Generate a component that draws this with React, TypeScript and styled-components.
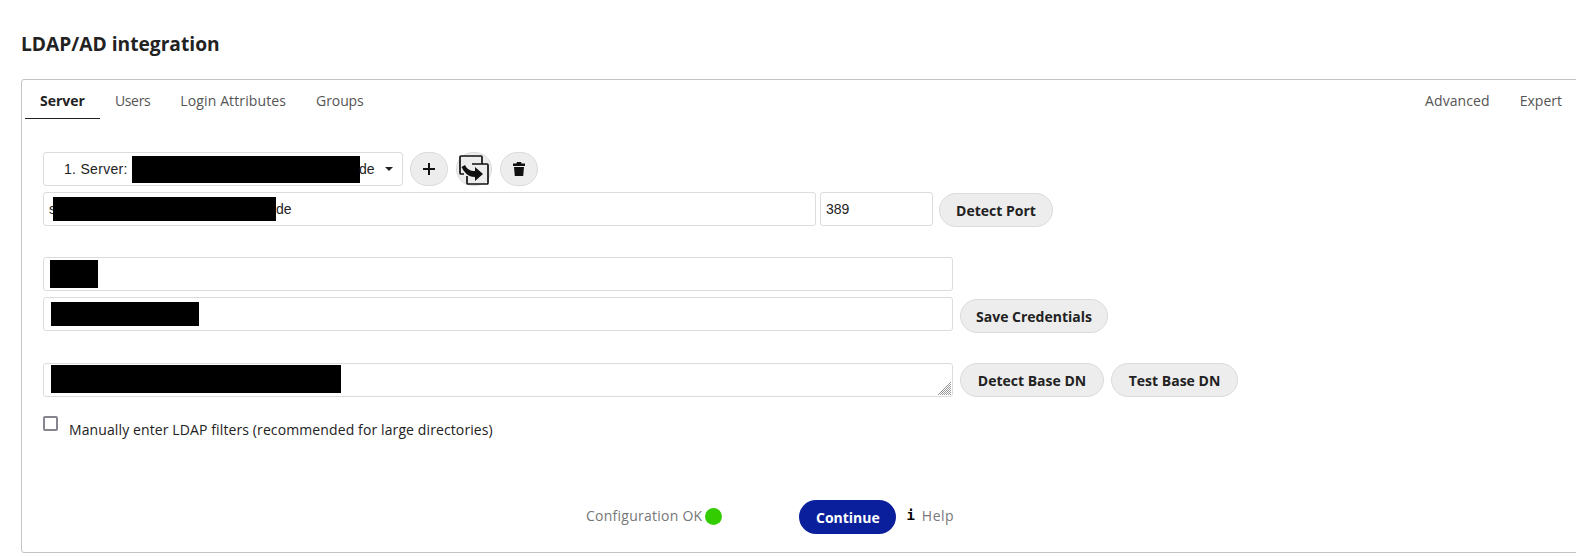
import React from 'react';
import styled, { createGlobalStyle } from 'styled-components';

const Global = createGlobalStyle`
  html, body { margin: 0; padding: 0; background: #fff; overflow: hidden; }
  body { font-family: "Open Sans", sans-serif; color: #222; width: 1576px; height: 556px; }
`;

const Page = styled.div`
  padding: 32px 0 0 21px;
  width: 1576px;
  box-sizing: border-box;
`;

const Title = styled.h2`
  margin: 0 0 22px;
  font-size: 19.2px;
  line-height: 24px;
  padding-bottom: 1px;
  font-weight: 700;
  color: #222;
`;

const Panel = styled.section`
  width: 1570px;
  height: 474px;
  box-sizing: border-box;
  border: 1px solid #c4c4c4;
  border-radius: 3px;
  display: flex;
  flex-direction: column;
`;

const Tabs = styled.nav`
  display: flex;
  justify-content: space-between;
  height: 39px;
  padding: 0 13px 0 3px;
  flex: none;
`;

const TabGroup = styled.div`
  display: flex;
`;

const Tab = styled.a<{ $active?: boolean; $spacing?: number }>`
  padding: 0 15px;
  font-size: 14px;
  line-height: 41px;
  height: 39px;
  box-sizing: border-box;
  letter-spacing: ${p => p.$spacing ?? 0}px;
  color: ${p => (p.$active ? '#222' : '#555')};
  font-weight: ${p => (p.$active ? 700 : 400)};
  border-bottom: ${p => (p.$active ? '1px solid #222' : '0')};
`;

const Body = styled.div`
  padding: 33px 0 0 21px;
  display: flex;
  flex-direction: column;
  flex: 1;
`;

const Row = styled.div<{ $top?: number }>`
  display: flex;
  align-items: flex-start;
  margin-top: ${p => p.$top ?? 0}px;
`;

const Field = styled.div<{ $width: number; $ml?: number }>`
  position: relative;
  width: ${p => p.$width}px;
  height: 34px;
  margin-left: ${p => p.$ml ?? 0}px;
  box-sizing: border-box;
  border: 1px solid #dcdcdc;
  border-radius: 3px;
  background: #fff;
  flex: none;
  font-family: "Liberation Sans", Arial, sans-serif;
  font-size: 14px;
  line-height: 32px;
  padding-left: 5px;
  color: #222;
  white-space: nowrap;
`;

const SelectField = styled(Field)`
  padding-left: 20px;
  line-height: 33px;
  letter-spacing: 0.3px;
`;

const Redaction = styled.span<{ $left: number; $top: number; $w: number; $h: number }>`
  position: absolute;
  left: ${p => p.$left}px;
  top: ${p => p.$top}px;
  width: ${p => p.$w}px;
  height: ${p => p.$h}px;
  background: #000;
`;

const TrailingText = styled.span<{ $left: number }>`
  position: absolute;
  left: ${p => p.$left}px;
  top: 0;
  letter-spacing: 0;
`;

const Caret = styled.span`
  position: absolute;
  right: 9px;
  top: 14px;
  width: 0;
  height: 0;
  border-left: 4px solid transparent;
  border-right: 4px solid transparent;
  border-top: 4px solid #222;
`;

const Grip = styled.svg`
  position: absolute;
  right: 0;
  bottom: 0;
`;

const Button = styled.button<{ $ml?: number; $w: number; $mt?: number }>`
  width: ${p => p.$w}px;
  height: 34px;
  padding: 0;
  margin-left: ${p => p.$ml ?? 0}px;
  margin-top: ${p => p.$mt ?? 0}px;
  border: 1px solid #dbdbdb;
  border-radius: 17px;
  background: #ededed;
  font-family: "Open Sans", sans-serif;
  font-size: 14px;
  font-weight: 700;
  color: #222;
  white-space: nowrap;
  flex: none;
`;

const IconButton = styled.button<{ $ml: number; $w: number }>`
  position: relative;
  width: ${p => p.$w}px;
  height: 34px;
  padding: 0;
  margin-left: ${p => p.$ml}px;
  border: 1px solid #dbdbdb;
  border-radius: 17px;
  background: #ededed;
  display: flex;
  align-items: center;
  justify-content: center;
  flex: none;
`;

const OverflowIcon = styled.svg`
  position: absolute;
  left: 0;
  top: 1px;
  overflow: visible;
`;

const CheckRow = styled.div`
  display: flex;
  align-items: flex-start;
  margin-top: 19px;
`;

const CheckBox = styled.span`
  width: 15px;
  height: 15px;
  box-sizing: border-box;
  border: 2px solid #85858f;
  border-radius: 2px;
  background: #fff;
  flex: none;
`;

const CheckLabel = styled.label`
  margin: 4px 0 0 11px;
  font-size: 14px;
  line-height: 19px;
  letter-spacing: 0.11px;
  color: #222;
`;

const Footer = styled.footer`
  display: flex;
  align-items: center;
  margin-top: 61px;
  padding-left: 543px;
`;

const Muted = styled.span<{ $spacing: number }>`
  margin-top: -3px;
  font-size: 14px;
  letter-spacing: ${p => p.$spacing}px;
  color: #777;
`;

const Dot = styled.span`
  width: 17px;
  height: 17px;
  margin: -1px 0 0 3px;
  border-radius: 50%;
  background: #3c0;
  flex: none;
`;

const Primary = styled.button`
  width: 97px;
  height: 34px;
  margin-left: 77px;
  border: 0;
  border-radius: 17px;
  background: #0a1f9c;
  color: #fff;
  font-family: "Open Sans", sans-serif;
  font-size: 14px;
  font-weight: 700;
  flex: none;
`;

const InfoGlyph = styled.span`
  margin: -5px 7px 0 10px;
  font-family: "DejaVu Sans Mono", monospace;
  font-size: 14px;
  font-weight: 700;
  color: #000;
`;

export default function App() {
  return (
    <Page>
      <Global />
      <Title>LDAP/AD integration</Title>
      <Panel>
        <Tabs>
          <TabGroup>
            <Tab $active>Server</Tab>
            <Tab $spacing={-0.35}>Users</Tab>
            <Tab $spacing={0.12}>Login Attributes</Tab>
            <Tab $spacing={-0.1}>Groups</Tab>
          </TabGroup>
          <TabGroup>
            <Tab $spacing={0.1}>Advanced</Tab>
            <Tab>Expert</Tab>
          </TabGroup>
        </Tabs>
        <Body>
          <Row>
            <SelectField $width={360}>
              1. Server: s
              <Redaction $left={88} $top={3} $w={228} $h={27} />
              <TrailingText $left={315}>de</TrailingText>
              <Caret />
            </SelectField>
            <IconButton $ml={7} $w={38}>
              <svg width="16" height="16" viewBox="0 0 16 16" aria-hidden="true">
                <path d="M8 2v12M2 8h12" stroke="#111" strokeWidth="2" fill="none" />
              </svg>
            </IconButton>
            <IconButton $ml={8} $w={36}>
              <OverflowIcon width="34" height="32" viewBox="0 0 34 32" aria-hidden="true">
                <path d="M7 20H4a1 1 0 0 1-1-1V3a1 1 0 0 1 1-1h20a1 1 0 0 1 1 1v7" stroke="#111" strokeWidth="1.7" fill="none" />
                <path d="M10 22v7a1 1 0 0 0 1 1h19a1 1 0 0 0 1-1V11a1 1 0 0 0-1-1H15" stroke="#111" strokeWidth="1.7" fill="none" />
                <path d="M4.500 13 8 11c2 4 5 6 10 6v-4l8 7-8 7v-4c-7 0-11-5-13.500-10z" fill="#111" />
              </OverflowIcon>
            </IconButton>
            <IconButton $ml={8} $w={38}>
              <svg width="14" height="16" viewBox="0 0 14 16" aria-hidden="true">
                <path d="M5 1h4l.6 1.500H13V5H1V2.500h3.400zM2 6h10l-.8 9H2.800z" fill="#111" />
              </svg>
            </IconButton>
          </Row>
          <Row $top={6}>
            <Field $width={773}>
              s
              <Redaction $left={9} $top={4} $w={223} $h={24} />
              <TrailingText $left={232}>de</TrailingText>
            </Field>
            <Field $width={113} $ml={4}>389</Field>
            <Button $ml={6} $w={114} $mt={1}>Detect Port</Button>
          </Row>
          <Row $top={30}>
            <Field $width={910}>
              <Redaction $left={6} $top={2} $w={48} $h={28} />
            </Field>
          </Row>
          <Row $top={6}>
            <Field $width={910}>
              <Redaction $left={7} $top={4} $w={148} $h={24} />
            </Field>
            <Button $ml={7} $w={148} $mt={2}>Save Credentials</Button>
          </Row>
          <Row $top={30}>
            <Field $width={910}>
              <Redaction $left={7} $top={1} $w={290} $h={28} />
              <Grip width="15" height="15" viewBox="0 0 15 15" aria-hidden="true">
                <path d="M14 1 1 14M14 3 3 14M14 5 5 14M14 7 7 14M14 9l-5 5M14 11l-3 3M14 13l-1 1" stroke="#808080" strokeWidth="0.8" fill="none" />
              </Grip>
            </Field>
            <Button $ml={7} $w={144}>Detect Base DN</Button>
            <Button $ml={7} $w={127}>Test Base DN</Button>
          </Row>
          <CheckRow>
            <CheckBox />
            <CheckLabel>Manually enter LDAP filters (recommended for large directories)</CheckLabel>
          </CheckRow>
          <Footer>
            <Muted $spacing={0.25}>Configuration OK</Muted>
            <Dot />
            <Primary>Continue</Primary>
            <InfoGlyph>i</InfoGlyph>
            <Muted $spacing={0.5}>Help</Muted>
          </Footer>
        </Body>
      </Panel>
    </Page>
  );
}
